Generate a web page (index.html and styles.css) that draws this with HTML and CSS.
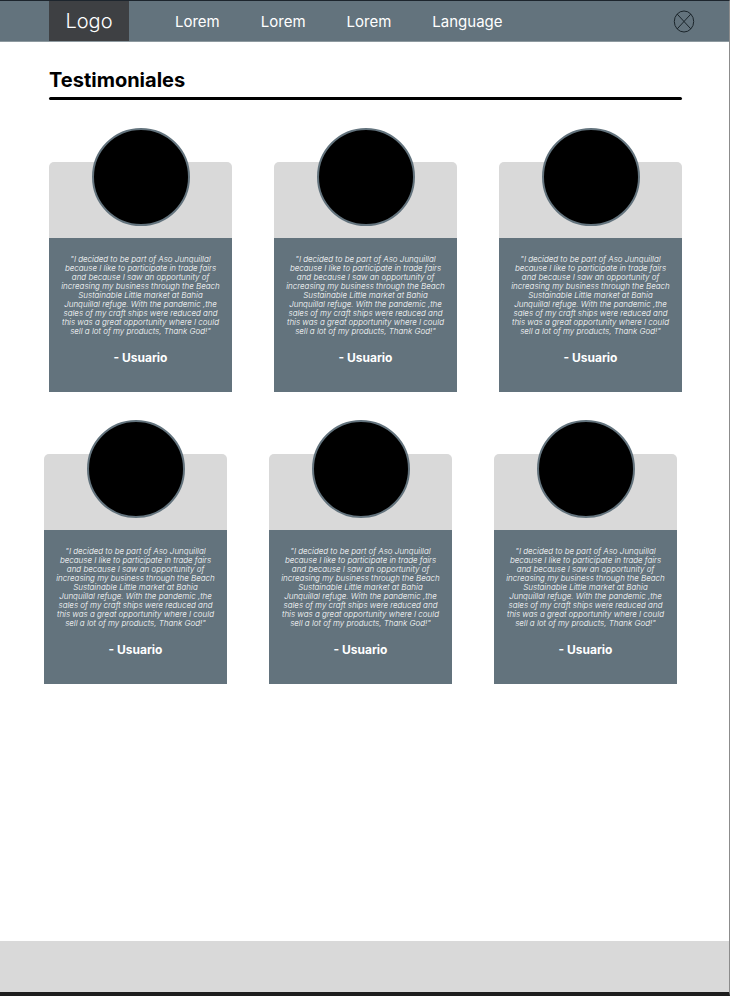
FILE: index.html
```html
<!DOCTYPE html>
<html lang="es">
<head>
<meta charset="utf-8">
<meta name="viewport" content="width=device-width, initial-scale=1">
<title>Testimoniales</title>
<link rel="stylesheet" href="styles.css">
</head>
<body>
<header class="topbar">
  <a class="logo" href="#">Logo</a>
  <nav class="nav">
    <a href="#">Lorem</a>
    <a href="#">Lorem</a>
    <a href="#">Lorem</a>
    <a href="#">Language</a>
  </nav>
  <button class="close" type="button" aria-label="Close">
    <svg viewBox="0 0 22 23" width="22" height="23" fill="none" stroke="#1b252b" stroke-width="1"><ellipse cx="11" cy="11.5" rx="9.7" ry="10.5"/><path d="M4.2 4.1 17.8 18.9M17.8 4.1 4.2 18.9"/></svg>
  </button>
</header>
<main class="content">
  <h1 class="title">Testimoniales</h1>
  <section class="cards">
    <article class="card">
      <div class="card-top"><div class="avatar"></div></div>
      <div class="card-body">
        <blockquote class="quote">"I decided to be part of Aso Junquillal<br>because I like to participate in trade fairs<br>and because I saw an opportunity of<br>increasing my business through the Beach<br>Sustainable Little market at Bahia<br>Junquillal refuge. With the pandemic ,the<br>sales of my craft ships were reduced and<br>this was a great opportunity where I could<br>sell a lot of my products, Thank God!"</blockquote>
        <p class="author">- Usuario</p>
      </div>
    </article>
    <article class="card">
      <div class="card-top"><div class="avatar"></div></div>
      <div class="card-body">
        <blockquote class="quote">"I decided to be part of Aso Junquillal<br>because I like to participate in trade fairs<br>and because I saw an opportunity of<br>increasing my business through the Beach<br>Sustainable Little market at Bahia<br>Junquillal refuge. With the pandemic ,the<br>sales of my craft ships were reduced and<br>this was a great opportunity where I could<br>sell a lot of my products, Thank God!"</blockquote>
        <p class="author">- Usuario</p>
      </div>
    </article>
    <article class="card">
      <div class="card-top"><div class="avatar"></div></div>
      <div class="card-body">
        <blockquote class="quote">"I decided to be part of Aso Junquillal<br>because I like to participate in trade fairs<br>and because I saw an opportunity of<br>increasing my business through the Beach<br>Sustainable Little market at Bahia<br>Junquillal refuge. With the pandemic ,the<br>sales of my craft ships were reduced and<br>this was a great opportunity where I could<br>sell a lot of my products, Thank God!"</blockquote>
        <p class="author">- Usuario</p>
      </div>
    </article>
  </section>
  <section class="cards cards-shifted">
    <article class="card">
      <div class="card-top"><div class="avatar"></div></div>
      <div class="card-body">
        <blockquote class="quote">"I decided to be part of Aso Junquillal<br>because I like to participate in trade fairs<br>and because I saw an opportunity of<br>increasing my business through the Beach<br>Sustainable Little market at Bahia<br>Junquillal refuge. With the pandemic ,the<br>sales of my craft ships were reduced and<br>this was a great opportunity where I could<br>sell a lot of my products, Thank God!"</blockquote>
        <p class="author">- Usuario</p>
      </div>
    </article>
    <article class="card">
      <div class="card-top"><div class="avatar"></div></div>
      <div class="card-body">
        <blockquote class="quote">"I decided to be part of Aso Junquillal<br>because I like to participate in trade fairs<br>and because I saw an opportunity of<br>increasing my business through the Beach<br>Sustainable Little market at Bahia<br>Junquillal refuge. With the pandemic ,the<br>sales of my craft ships were reduced and<br>this was a great opportunity where I could<br>sell a lot of my products, Thank God!"</blockquote>
        <p class="author">- Usuario</p>
      </div>
    </article>
    <article class="card">
      <div class="card-top"><div class="avatar"></div></div>
      <div class="card-body">
        <blockquote class="quote">"I decided to be part of Aso Junquillal<br>because I like to participate in trade fairs<br>and because I saw an opportunity of<br>increasing my business through the Beach<br>Sustainable Little market at Bahia<br>Junquillal refuge. With the pandemic ,the<br>sales of my craft ships were reduced and<br>this was a great opportunity where I could<br>sell a lot of my products, Thank God!"</blockquote>
        <p class="author">- Usuario</p>
      </div>
    </article>
  </section>
</main>
<footer class="footer"></footer>
</body>
</html>
```
FILE: styles.css
```css
* {
  box-sizing: border-box;
}

body {
  margin: 0;
  min-height: 100vh;
  display: flex;
  flex-direction: column;
  border-top: 1px solid #1d252d;
  border-right: 1px solid #8c8c8c;
  border-bottom: 4px solid #1e1e1e;
  background: #fff;
  color: #000;
  font-family: Inter, "Liberation Sans", sans-serif;
}

a {
  color: inherit;
  text-decoration: none;
}

.topbar {
  display: flex;
  align-items: stretch;
  min-height: 41px;
  padding: 0 34px 0 49px;
  border-bottom: 1px solid #8d999f;
  background: #63737d;
  color: #fff;
}

.logo {
  display: flex;
  align-items: center;
  justify-content: center;
  width: 80px;
  background: #3e4043;
  font-size: 20px;
  font-weight: 300;
}

.nav {
  display: flex;
  align-items: center;
  gap: 41px;
  margin-left: 46px;
  font-size: 15px;
  font-weight: 400;
}

.close {
  display: flex;
  align-items: center;
  margin-left: auto;
  padding: 0;
  border: 0;
  background: none;
}

.content {
  flex: 1;
  padding: 24px 47px 40px 49px;
}

.title {
  margin: 0;
  font-size: 20px;
  line-height: 28px;
  font-weight: 700;
}

.title::after {
  content: "";
  display: block;
  height: 3px;
  margin-top: 3px;
  border-radius: 2px;
  background: #000;
}

.cards {
  display: grid;
  grid-template-columns: repeat(3, 1fr);
  gap: 42px;
  margin-top: 62px;
}

.cards-shifted {
  margin-left: -5px;
  margin-right: 5px;
}

.card-top {
  display: flex;
  justify-content: center;
  align-items: flex-start;
  height: 76px;
  border-radius: 5px 5px 0 0;
  background: #d9d9d9;
}

.avatar {
  width: 98px;
  height: 98px;
  margin-top: -34px;
  border: 2px solid #63737d;
  border-radius: 50%;
  background: #000;
}

.card-body {
  padding: 17px 0 25px;
  background: #63737d;
  color: #fff;
  text-align: center;
}

.quote {
  margin: 0;
  font-size: 8px;
  line-height: 9px;
  font-style: italic;
  font-weight: 300;
  white-space: nowrap;
}

.author {
  margin: 13px 0 0;
  font-size: 12px;
  line-height: 18px;
  font-weight: 700;
}

.footer {
  height: 51px;
  background: #d9d9d9;
}
```
